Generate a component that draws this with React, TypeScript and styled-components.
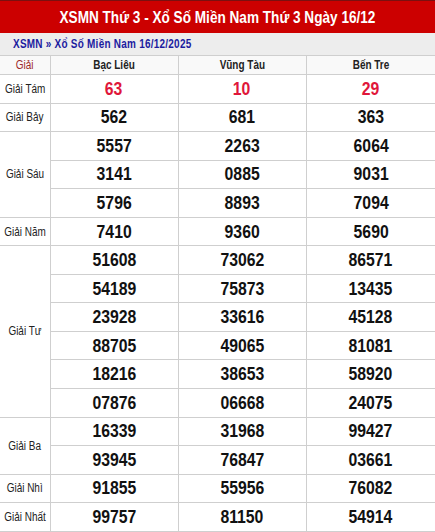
import React from "react";
import styled, { createGlobalStyle } from "styled-components";

const Global = createGlobalStyle`
  html, body { margin: 0; padding: 0; background: #ffffff; }
  body { font-family: "Liberation Sans", Arial, sans-serif; }
`;

const Page = styled.div`
  width: 435px;
  overflow: hidden;
`;

/* The reference renders its text horizontally condensed */
const Narrow = styled.span<{ $origin?: string; $scale?: number }>`
  display: inline-block;
  white-space: nowrap;
  transform: scaleX(${(p) => p.$scale ?? 0.83});
  transform-origin: ${(p) => p.$origin || "center"};
`;

const TitleBar = styled.h1`
  margin: 0;
  height: 33px;
  box-sizing: border-box;
  border-top: 1px solid #7a1010;
  padding-top: 1px;
  background: #cc0000;
  color: #ffffff;
  font-size: 17px;
  font-weight: bold;
  display: flex;
  align-items: center;
  justify-content: center;
`;

const SubBar = styled.div`
  height: 22px;
  background: #ededed;
  display: flex;
  align-items: center;
  padding-left: 13px;
  font-size: 12px;
  font-weight: bold;
  color: #1c1ca0;
  letter-spacing: 0.3px;
`;

const Table = styled.table`
  width: 435px;
  border-collapse: collapse;
  table-layout: fixed;
  border-top: 1px solid #cfcfcf;
`;

const HeadRow = styled.tr`
  height: 19px;
  background: #f9f9f9;
`;

const HeadCell = styled.th<{ $prize?: boolean }>`
  padding: 0;
  border: 1px solid #cfcfcf;
  font-size: 12px;
  font-weight: ${(p) => (p.$prize ? "normal" : "bold")};
  color: ${(p) => (p.$prize ? "#9e2a2a" : "#222222")};
  text-align: center;
  vertical-align: middle;
  overflow: visible;
  &:first-child { border-left: none; }
  &:last-child { border-right: none; }
`;

const Row = styled.tr`
  height: 28.56px;
`;

const LabelCell = styled.td`
  padding: 0;
  border: 1px solid #cfcfcf;
  border-left: none;
  font-size: 12px;
  color: #222222;
  text-align: center;
  vertical-align: middle;
  white-space: nowrap;
  overflow: visible;
`;

const NumCell = styled.td<{ $red?: boolean }>`
  padding: 0;
  border: 1px solid #cfcfcf;
  font-size: 19px;
  font-weight: bold;
  color: ${(p) => (p.$red ? "#e0163a" : "#111111")};
  text-align: center;
  vertical-align: middle;
  &:last-child { border-right: none; }
`;

type Prize = { label: string; rows: string[][]; red?: boolean };

const prizes: Prize[] = [
  { label: "Giải Tám", rows: [["63", "10", "29"]], red: true },
  { label: "Giải Bảy", rows: [["562", "681", "363"]] },
  {
    label: "Giải Sáu",
    rows: [
      ["5557", "2263", "6064"],
      ["3141", "0885", "9031"],
      ["5796", "8893", "7094"],
    ],
  },
  { label: "Giải Năm", rows: [["7410", "9360", "5690"]] },
  {
    label: "Giải Tư",
    rows: [
      ["51608", "73062", "86571"],
      ["54189", "75873", "13435"],
      ["23928", "33616", "45128"],
      ["88705", "49065", "81081"],
      ["18216", "38653", "58920"],
      ["07876", "06668", "24075"],
    ],
  },
  {
    label: "Giải Ba",
    rows: [
      ["16339", "31968", "99427"],
      ["93945", "76847", "03661"],
    ],
  },
  { label: "Giải Nhì", rows: [["91855", "55956", "76082"]] },
  { label: "Giải Nhất", rows: [["99757", "81150", "54914"]] },
];

export default function App() {
  return (
    <Page>
      <Global />
      <TitleBar>
        <Narrow $scale={0.8}>XSMN Thứ 3 - Xổ Số Miền Nam Thứ 3 Ngày 16/12</Narrow>
      </TitleBar>
      <SubBar>
        <Narrow $origin="left center">XSMN » Xổ Số Miền Nam 16/12/2025</Narrow>
      </SubBar>
      <Table>
        <colgroup>
          <col style={{ width: 50 }} />
          <col style={{ width: 128 }} />
          <col style={{ width: 128 }} />
          <col style={{ width: 129 }} />
        </colgroup>
        <thead>
          <HeadRow>
            <HeadCell $prize>
              <Narrow>Giải</Narrow>
            </HeadCell>
            <HeadCell>
              <Narrow>Bạc Liêu</Narrow>
            </HeadCell>
            <HeadCell>
              <Narrow>Vũng Tàu</Narrow>
            </HeadCell>
            <HeadCell>
              <Narrow>Bến Tre</Narrow>
            </HeadCell>
          </HeadRow>
        </thead>
        <tbody>
          {prizes.map((p) =>
            p.rows.map((r, i) => (
              <Row key={p.label + i}>
                {i === 0 && (
                  <LabelCell rowSpan={p.rows.length}>
                    <Narrow>{p.label}</Narrow>
                  </LabelCell>
                )}
                {r.map((n, j) => (
                  <NumCell key={j} $red={p.red}>
                    <Narrow>{n}</Narrow>
                  </NumCell>
                ))}
              </Row>
            ))
          )}
        </tbody>
      </Table>
    </Page>
  );
}
